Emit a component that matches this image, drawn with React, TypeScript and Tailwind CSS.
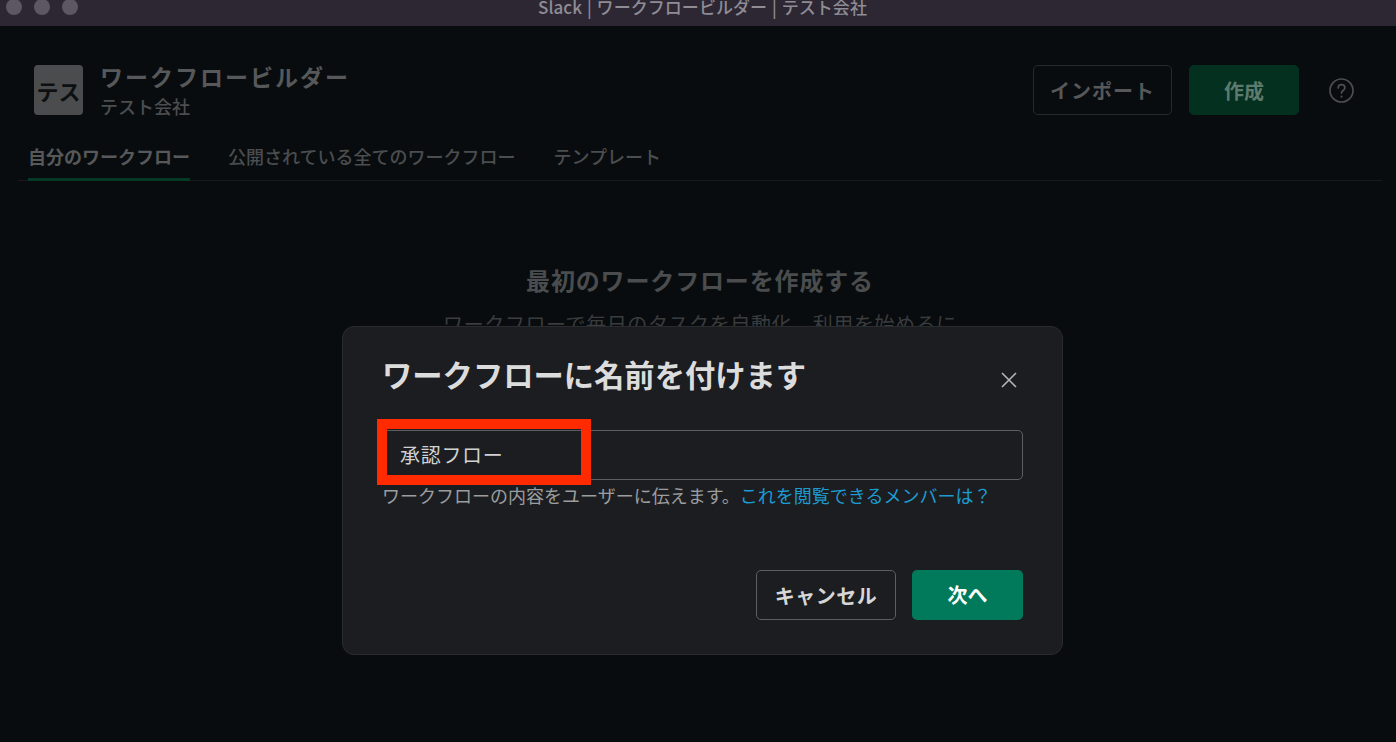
import React from "react";

const font = { fontFamily: '"Noto Sans CJK JP", "Noto Sans", sans-serif' };

export default function App() {
  return (
    <div
      className="relative h-[742px] w-[1396px] overflow-hidden bg-[#080c0e] font-['Noto_Sans_CJK_JP',sans-serif]"
      style={font}
    >
      <div className="relative flex h-[26px] items-end justify-center bg-[#2c2733] pb-[9px] pl-[9px]">
        <div className="absolute left-[6px] top-[-1px] flex gap-[12px]">
          <span className="h-[16px] w-[16px] rounded-full bg-[#5c5763]" />
          <span className="h-[16px] w-[16px] rounded-full bg-[#5c5763]" />
          <span className="h-[16px] w-[16px] rounded-full bg-[#5c5763]" />
        </div>
        <span className="whitespace-nowrap text-[17px] font-medium leading-[20px] tracking-[0.05px] text-[#8f8c95] [word-spacing:1px]">
          Slack | ワークフロービルダー | テスト会社
        </span>
      </div>

      <header className="box-content flex h-[50px] items-center pl-[34px] pr-[42px] pt-[39px]">
        <div className="flex h-[50px] w-[49px] items-center justify-center rounded-[4px] bg-[#4b4c4d] text-[22px] font-bold leading-none text-[#0d1012]">
          テス
        </div>
        <div className="ml-[17px] flex flex-col">
          <span className="text-[23px] font-bold leading-[28px] tracking-[2px] text-[#56585a]">ワークフロービルダー</span>
          <span className="mt-[4px] text-[18px] font-medium leading-[24px] text-[#4b4d4f]">テスト会社</span>
        </div>
        <div className="ml-auto flex items-center">
          <button className="h-[50px] w-[139px] rounded-[5px] border border-[#27292b] pt-[2px] text-[20px] font-bold tracking-[1px] text-[#56585a]">
            インポート
          </button>
          <button className="ml-[17px] h-[50px] w-[110px] rounded-[5px] bg-[#04301f] pt-[2px] text-[20px] font-bold text-[#5d7a6e]">
            作成
          </button>
          <svg className="ml-[30px]" width="25" height="25" viewBox="0 0 25 25" fill="none">
            <circle cx="12.5" cy="12.5" r="11.5" stroke="#4c4e50" strokeWidth="1.7" />
            <path
              d="M9.2 10c0-2 1.5-3.3 3.4-3.3s3.3 1.2 3.3 3c0 1.4-.8 2.1-1.8 2.8-1 .7-1.6 1.3-1.6 2.6"
              stroke="#4c4e50"
              strokeWidth="1.7"
              strokeLinecap="round"
            />
            <circle cx="12.5" cy="18.6" r="1.1" fill="#4c4e50" />
          </svg>
        </div>
      </header>

      <nav className="ml-[18px] mr-[14px] mt-[27px] flex h-[39px] gap-[38px] border-b border-[#17191b] pl-[10px] text-[18px] font-medium leading-[28px]">
        <span className="h-[39px] border-b-[3px] border-[#053a27] font-bold text-[#56585a]">自分のワークフロー</span>
        <span className="text-[#4b4d4f]">公開されている全てのワークフロー</span>
        <span className="text-[#4b4d4f]">テンプレート</span>
      </nav>

      <section className="flex flex-col items-center pl-[4px] pt-[81px]">
        <h2 className="text-[24px] font-bold leading-[36px] tracking-[0.85px] text-[#4a4c4e]">最初のワークフローを作成する</h2>
        <p className="mt-[11px] text-[20px] leading-[30px] tracking-[0.6px] text-[#3a3c3e]">ワークフローで毎日のタスクを自動化、利用を始めるに</p>
      </section>

      <div className="absolute left-[342px] top-[326px] flex h-[329px] w-[721px] flex-col rounded-[12px] border border-[#2a2b2e] bg-[#1b1d21] px-[39px] pt-[26px]">
        <div className="flex items-start justify-between">
          <h1 className="text-[30.3px] font-bold leading-[42px] text-[#dcdcdd]">ワークフローに名前を付けます</h1>
          <svg className="mr-[5px] mt-[18px]" width="18" height="18" viewBox="0 0 18 18" fill="none">
            <path d="M2 2l14 14M16 2L2 16" stroke="#b4b5b6" strokeWidth="1.6" />
          </svg>
        </div>
        <div className="mt-[35px] flex h-[50px] items-center rounded-[5px] border border-[#5d5e61] pl-[17px] text-[20px] tracking-[0.7px] text-[#d2d2d3]">
          承認フロー
        </div>
        <p className="mt-[2px] text-[18px] leading-[27px] text-[#9c9d9f]">
          ワークフローの内容をユーザーに伝えます。
          <span className="text-[#1d9bd1]">これを閲覧できるメンバーは？</span>
        </p>
        <div className="mb-[34px] mt-auto flex justify-end gap-[16px]">
          <button className="h-[50px] w-[140px] rounded-[5px] border border-[#5d5e61] pt-[2px] text-[20px] font-bold tracking-[0.5px] text-[#d6d6d7]">
            キャンセル
          </button>
          <button className="h-[50px] w-[111px] rounded-[5px] bg-[#007a5a] text-[20px] font-bold text-white">
            次へ
          </button>
        </div>
      </div>

      <div className="absolute left-[377px] top-[419px] h-[66px] w-[214px] border-[10px] border-[#ff2a00]" />
    </div>
  );
}
